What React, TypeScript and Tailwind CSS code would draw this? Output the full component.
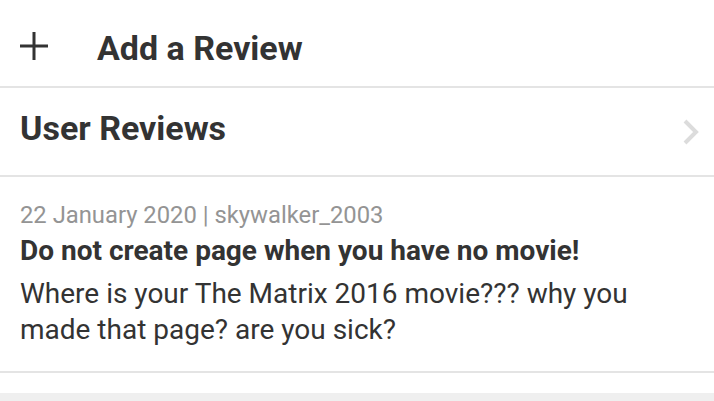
export default function App() {
    return (
        <div className="w-[714px] h-[401px] overflow-hidden bg-white text-[#333] font-['Roboto',sans-serif]">
            <div className="h-[88px] flex items-center pt-[10px] pl-[20px] border-b-2 border-[#e4e4e4]">
                <svg width="28" height="28" viewBox="0 0 28 28" className="shrink-0 -mt-[4px]">
                    <path d="M14 0v28M0 14h28" stroke="#333" strokeWidth="3" />
                </svg>
                <span className="ml-[49px] text-[34px] leading-[40px] font-bold">Add a Review</span>
            </div>
            <div className="h-[89px] flex items-center justify-between pl-[20px] pr-[14px] border-b-2 border-[#e4e4e4]">
                <span className="mb-[8px] text-[34px] leading-[40px] font-bold">User Reviews</span>
                <svg width="18" height="28" viewBox="0 0 18 28" className="shrink-0">
                    <polyline points="3,3 14,14 3,25" fill="none" stroke="#dcdcdc" strokeWidth="4" />
                </svg>
            </div>
            <div className="h-[196px] pl-[20px] pr-[24px] pt-[23px] border-b-2 border-[#e4e4e4]">
                <p className="text-[23.8px] leading-[30px] text-[#949494]">22 January 2020 | skywalker_2003</p>
                <p className="mt-[3px] text-[28px] leading-[36px] font-bold">Do not create page when you have no movie!</p>
                <p className="mt-[7px] text-[28px] leading-[36px]">Where is your The Matrix 2016 movie??? why you made that page? are you sick?</p>
            </div>
            <div className="h-[20px] mt-[20px] bg-[#efefef]" />
        </div>
    )
}
